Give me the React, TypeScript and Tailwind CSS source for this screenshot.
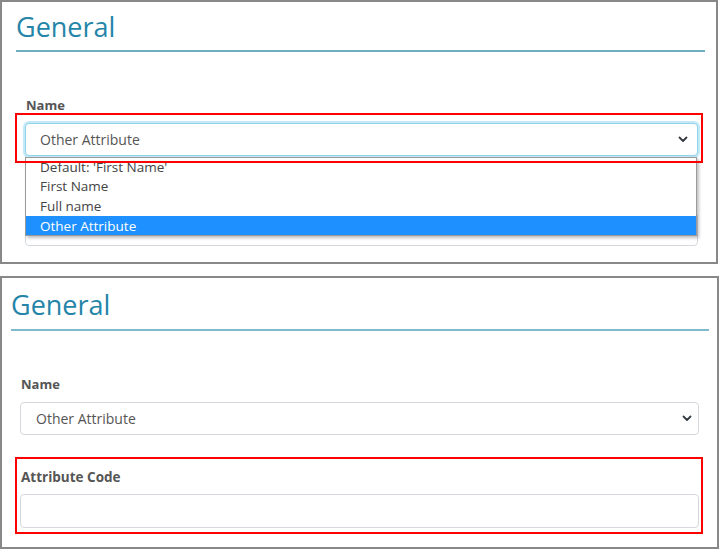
import React from "react";

const font = { fontFamily: '"Open Sans", "Noto Sans", sans-serif' };

function Chevron() {
  return (
    <svg width="10" height="7" viewBox="0 0 10 7" className="block">
      <polyline points="1.5,1.5 5,5 8.5,1.5" fill="none" stroke="#343a40" strokeWidth="1.8" strokeLinecap="round" strokeLinejoin="round" />
    </svg>
  );
}

export default function App() {
  return (
    <div className="w-[720px] h-[550px] bg-white overflow-hidden" style={font}>
      {/* Panel 1 */}
      <div className="relative w-[718px] h-[264px] border-2 border-[#888888] bg-white">
        <div className="ml-[14px] mr-[11px] pt-[7px] pb-[5px] border-b-2 border-[#6eaec1] text-[27px] leading-[36px] text-[#2585a8]">
          General
        </div>
        <div className="mt-[44px] ml-[23px] mr-[18px]">
          <div className="pl-[1px] text-[13px] leading-[18px] font-bold text-[#555555]">Name</div>
          <div className="mt-[9px] h-[33px] rounded-[4px] border border-[#8fd3ea] shadow-[0_0_0_2px_rgba(150,215,238,0.55)] bg-white flex items-center justify-between pl-[14px] pr-[9px]">
            <span className="text-[14px] text-[#555555]">Other Attribute</span>
            <Chevron />
          </div>
          <div className="mt-[56px] h-[34px] rounded-[4px] border border-[#d4d8dd] bg-white" />
        </div>

        {/* open dropdown list */}
        <div className="absolute left-[23px] top-[155px] w-[672px] h-[79px] border border-[#9a9a9a] bg-white shadow-[2px_2px_3px_rgba(0,0,0,0.25)] overflow-hidden text-[13.5px] text-[#444444]">
          <div className="h-[20px] leading-[20px] pl-[14px] -mt-[1px]">Default: 'First Name'</div>
          <div className="h-[19.5px] leading-[19.5px] pl-[14px]">First Name</div>
          <div className="h-[19.5px] leading-[19.5px] pl-[14px]">Full name</div>
          <div className="h-[20px] leading-[20px] pl-[14px] bg-[#1e90ff] text-white">Other Attribute</div>
        </div>

        {/* red highlight */}
        <div className="absolute left-[13px] top-[111px] w-[688px] h-[50px] border-2 border-[#ff0000]" />
      </div>

      {/* Panel 2 */}
      <div className="relative mt-[12px] w-[719px] h-[273px] border-2 border-[#888888] bg-white">
        <div className="ml-[9px] mr-[8px] pt-[9px] pb-[6px] border-b-2 border-[#7fb9ca] text-[27px] leading-[36px] text-[#2585a8]">
          General
        </div>
        <div className="mt-[44px] ml-[18px] mr-[18px]">
          <div className="pl-[1px] text-[13px] leading-[18px] font-bold text-[#555555]">Name</div>
          <div className="mt-[9px] h-[33px] rounded-[4px] border border-[#d4d8dd] bg-white flex items-center justify-between pl-[15px] pr-[6px]">
            <span className="text-[14px] text-[#555555]">Other Attribute</span>
            <Chevron />
          </div>
          <div className="mt-[33px] pl-[1px] text-[13.5px] leading-[18px] font-bold text-[#555555]">Attribute Code</div>
          <div className="mt-[8px] h-[34px] rounded-[4px] border border-[#d4d8dd] bg-white" />
        </div>

        {/* red highlight */}
        <div className="absolute left-[13px] top-[179px] w-[688px] h-[77px] border-2 border-[#ff0000]" />
      </div>
    </div>
  );
}
